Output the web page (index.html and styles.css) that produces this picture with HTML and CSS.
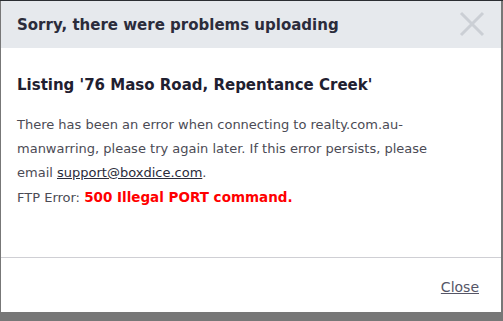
FILE: index.html
```html
<!DOCTYPE html>
<html>
<head>
<meta charset="utf-8">
<link rel="stylesheet" href="styles.css">
</head>
<body>
<div class="modal">
  <div class="modal-header">
    <h1 class="modal-title">Sorry, there were problems uploading</h1>
    <span class="close-x" aria-label="close">
      <svg width="26" height="26" viewBox="0 0 26 26"><path d="M2 2 L24 24 M24 2 L2 24" stroke="#cbcfd5" stroke-width="3" fill="none"/></svg>
    </span>
  </div>
  <div class="modal-body">
    <h2 class="listing">Listing '76 Maso Road, Repentance Creek'</h2>
    <p class="msg">There has been an error when connecting to realty.com.au-manwarring, please try again later. If this error persists, please email <a href="#">support@boxdice.com</a>.<br>FTP Error: <strong class="err">500 Illegal PORT command.</strong></p>
  </div>
  <div class="modal-footer">
    <a href="#" class="close-link">Close</a>
  </div>
</div>
</body>
</html>
```
FILE: styles.css
```css
html, body { margin: 0; padding: 0; }
body {
  width: 503px; height: 321px;
  background: #777777;
  font-family: "DejaVu Sans", sans-serif;
  overflow: hidden;
  border-top: 1px solid #2b2e33;
  box-sizing: border-box;
}
.modal {
  margin-left: 1px;
  width: 500px;
  height: 311px;
  background: #fff;
  display: flex;
  flex-direction: column;
}
.modal-header {
  background: #e6e9ed;
  height: 47px;
  display: flex;
  align-items: center;
  justify-content: space-between;
  padding: 0 16px 0 16px;
}
.modal-title {
  margin: 0;
  font-size: 15px;
  font-weight: bold;
  color: #2b2c3b;
}
.close-x { display: flex; margin-top: -2px; }
.modal-body {
  padding: 28px 40px 0 16px;
  flex: 1;
  border-bottom: 1px solid #cfcfd4;
}
.listing {
  margin: 0 0 19px 0;
  font-size: 15px;
  font-weight: bold;
  color: #1f2030;
}
.msg {
  margin: 0;
  font-size: 13px;
  line-height: 24px;
  color: #4b4b55;
}
.msg a { color: #2b2c3b; }
.err { color: #ff0000; font-size: 13.5px; }
.modal-footer {
  height: 54px;
  box-sizing: border-box;
  padding-top: 4px;
  display: flex;
  align-items: center;
  justify-content: flex-end;
  padding-right: 22px;
}
.close-link {
  font-size: 14px;
  color: #555566;
}
```
